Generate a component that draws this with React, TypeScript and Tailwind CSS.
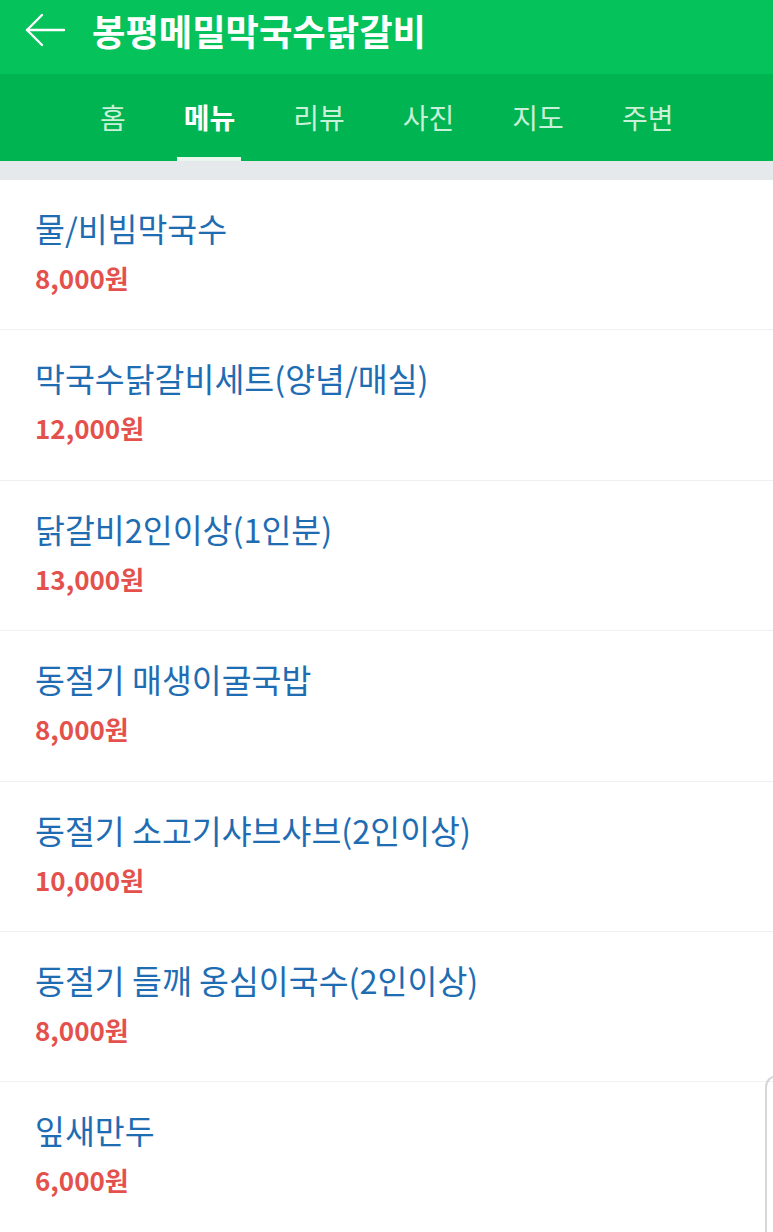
import { useState } from 'react'

interface MenuItem {
  name: string
  price: string
}

const tabs = ['홈', '메뉴', '리뷰', '사진', '지도', '주변']

const items: MenuItem[] = [
  { name: '물/비빔막국수', price: '8,000원' },
  { name: '막국수닭갈비세트(양념/매실)', price: '12,000원' },
  { name: '닭갈비2인이상(1인분)', price: '13,000원' },
  { name: '동절기 매생이굴국밥', price: '8,000원' },
  { name: '동절기 소고기샤브샤브(2인이상)', price: '10,000원' },
  { name: '동절기 들깨 옹심이국수(2인이상)', price: '8,000원' },
  { name: '잎새만두', price: '6,000원' },
]

export default function App() {
  const [active, setActive] = useState(1)

  return (
    <main
      className="relative w-[773px] h-[1232px] overflow-hidden bg-white"
      style={{ fontFamily: '"Noto Sans CJK KR", "Noto Sans", sans-serif' }}
    >
      {/* Top bar */}
      <div className="h-[74px] bg-[#05c25a] flex items-center pl-[24px] pb-[14px]">
        <svg width="42" height="36" viewBox="0 0 42 36" fill="none" stroke="white" strokeWidth="2.4" strokeLinecap="round" strokeLinejoin="round">
          <path d="M40 18H3" />
          <path d="M18 3L3 18l15 15" />
        </svg>
        <h1 className="ml-[26px] text-white text-[36.3px] font-bold leading-none">봉평메밀막국수닭갈비</h1>
      </div>

      {/* Tabs */}
      <nav className="h-[87px] bg-[#00b451] flex pl-[71px]">
        {tabs.map((t, i) => (
          <button
            key={t}
            onClick={() => setActive(i)}
            className="relative h-full px-[29px] flex items-center justify-center pb-[2px]"
          >
            <span
              className={`text-[28px] leading-none ${
                i === active ? 'text-white font-bold' : 'text-[#c9f0d8] font-normal'
              }`}
            >
              {t}
            </span>
            {i === active && (
              <span className="absolute bottom-0 left-[22px] right-[23px] h-[4px] bg-[#eaf7ef]" />
            )}
          </button>
        ))}
      </nav>

      <div className="h-[19px] bg-[#e6e9ec]" />

      {/* Menu list */}
      <ul>
        {items.map((item) => (
          <li key={item.name} className="h-[150.4px] border-b border-[#eef0f1] pl-[35px] pt-[27px]">
            <p className="text-[#1e6db3] text-[32.5px] leading-[42px] font-normal">{item.name}</p>
            <p className="text-[#e4514c] text-[26px] leading-[40px] font-bold mt-[9px]">{item.price}</p>
          </li>
        ))}
      </ul>

      {/* scroll edge overlay */}
      <div className="absolute left-[765px] top-[1075px] w-[20px] h-[200px] border-l-2 border-t-2 border-[#d6d6d6] rounded-tl-[12px]" />
    </main>
  )
}
